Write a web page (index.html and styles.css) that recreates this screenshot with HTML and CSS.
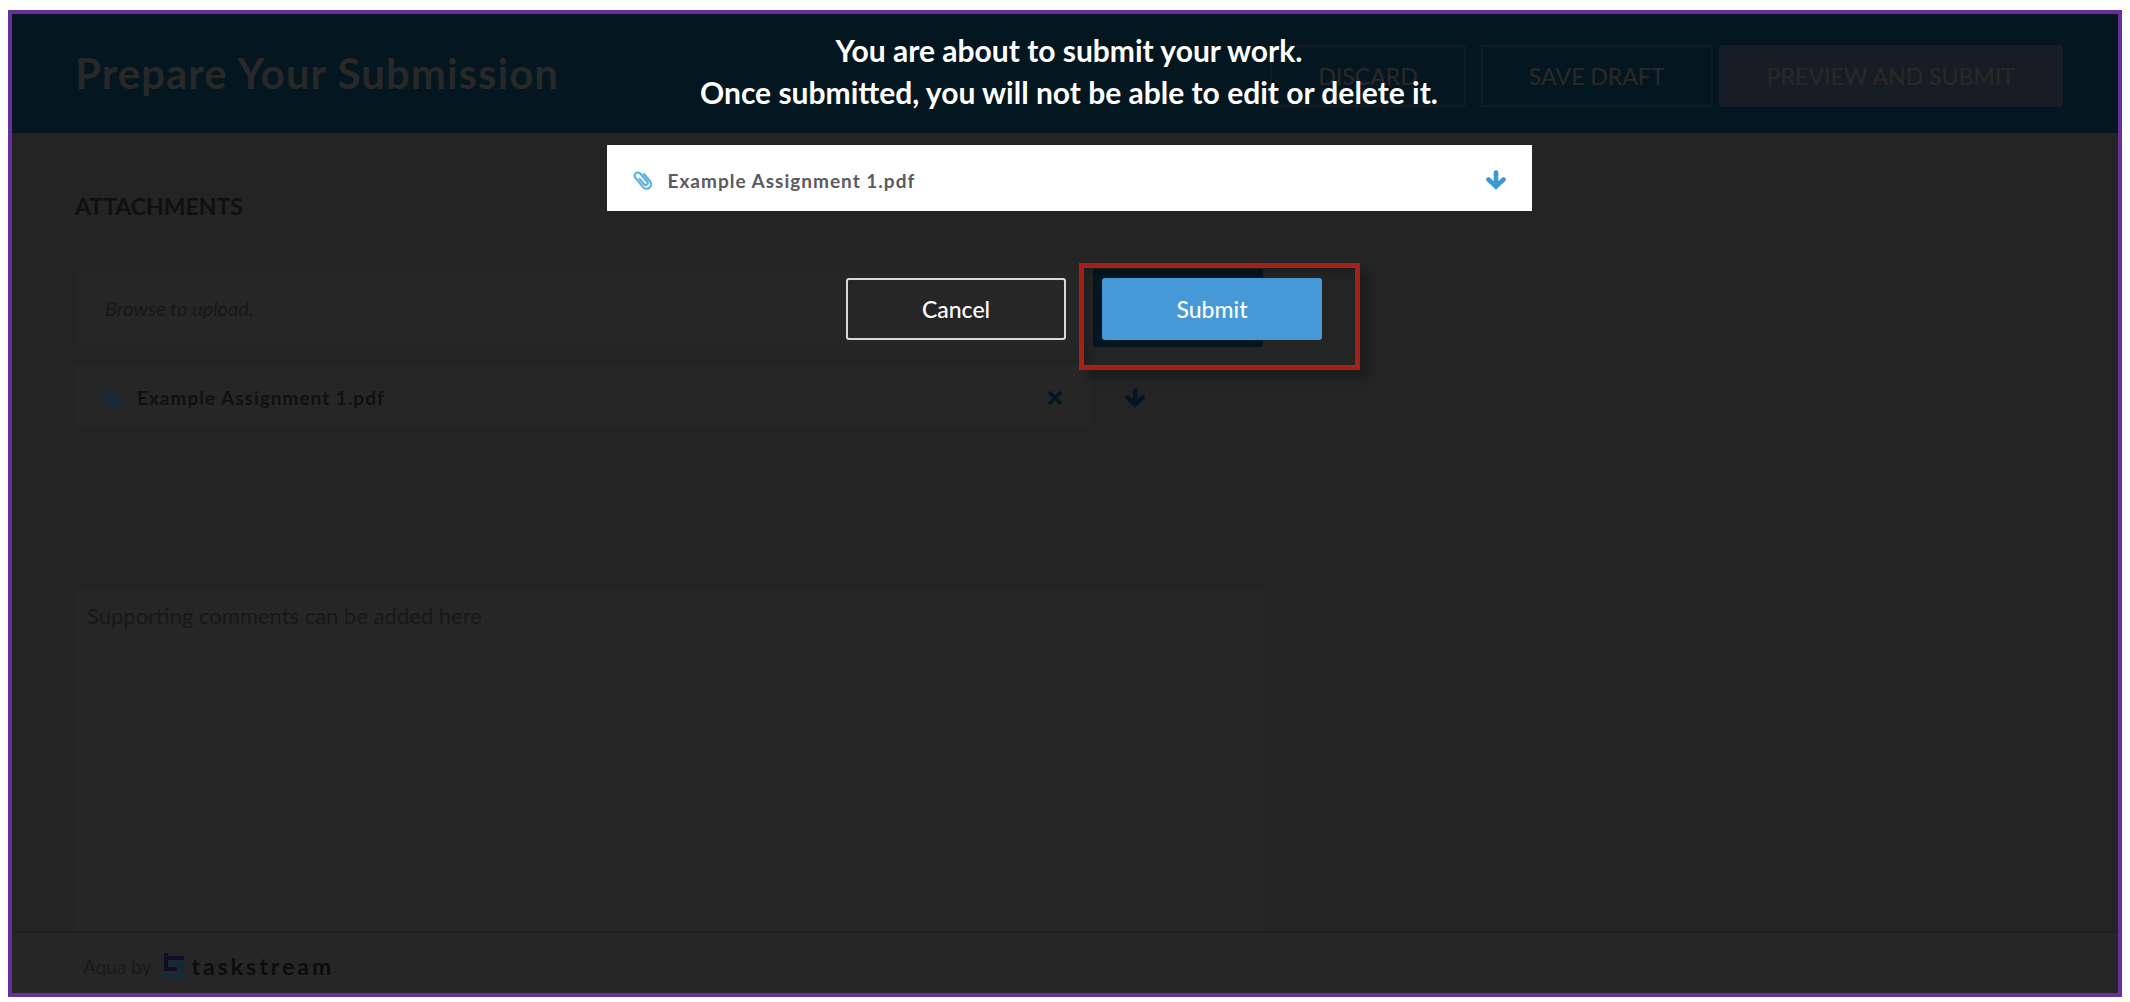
FILE: index.html
```html
<!DOCTYPE html>
<html lang="en">
<head>
<meta charset="utf-8">
<title>Prepare Your Submission</title>
<link rel="stylesheet" href="styles.css">
</head>
<body>
<svg class="sprite" aria-hidden="true">
  <symbol id="clip" viewBox="0 0 20 20">
    <g transform="rotate(-40 10 10)" fill="none" stroke="currentColor" stroke-width="2.200" stroke-linecap="round">
      <path d="M14.500 6V15.500a4.500 4.500 0 0 1-9 0V3.500a3.300 3.300 0 0 1 6.600 0V14a2 2 0 0 1-4 0V7"/>
    </g>
  </symbol>
  <symbol id="arrow" viewBox="0 0 20 20">
    <path d="M10 2.500v13M2.500 9.500l7.500 7 7.500-7" fill="none" stroke="currentColor" stroke-width="4.600" stroke-linecap="round"/>
  </symbol>
  <symbol id="cross" viewBox="0 0 20 20">
    <path d="M4 4l12 12M16 4L4 16" fill="none" stroke="currentColor" stroke-width="3.600"/>
  </symbol>
</svg>
<div class="frame">
  <header class="topbar">
    <h1 class="title">Prepare Your Submission</h1>
    <div class="actions">
      <button class="action discard">DISCARD</button>
      <button class="action">SAVE DRAFT</button>
      <button class="action primary">PREVIEW AND SUBMIT</button>
    </div>
  </header>
  <main class="content">
    <h2 class="section">ATTACHMENTS</h2>
    <div class="upload">
      <input class="browse" type="text" aria-label="Browse to upload" placeholder="Browse to upload." readonly>
      <button class="browse-btn" aria-label="Browse"></button>
    </div>
    <div class="attachment">
      <div class="file">
        <svg class="icon clip"><use href="#clip"/></svg>
        <span class="file-name">Example Assignment 1.pdf</span>
        <button class="icon-btn" aria-label="Remove"><svg class="icon"><use href="#cross"/></svg></button>
      </div>
      <button class="icon-btn download" aria-label="Download"><svg class="icon"><use href="#arrow"/></svg></button>
    </div>
    <textarea class="comments" aria-label="Comments" placeholder="Supporting comments can be added here"></textarea>
  </main>
  <footer class="footer">
    <span class="by">Aqua by</span>
    <svg class="logo" viewBox="0 0 20 26" aria-hidden="true">
      <path d="M2 0V16H13M2 5H20" fill="none" stroke="#150b26" stroke-width="4"/>
      <path d="M6 10.500H18V23H0" fill="none" stroke="#0c2e3c" stroke-width="4"/>
    </svg>
    <span class="brand">taskstream</span>
  </footer>
  <section class="dialog" role="dialog" aria-label="Confirm submission">
    <p class="message">You are about to submit your work.<br>Once submitted, you will not be able to edit or delete it.</p>
    <div class="card">
      <svg class="icon clip"><use href="#clip"/></svg>
      <span class="card-name">Example Assignment 1.pdf</span>
      <button class="icon-btn" aria-label="Download"><svg class="icon"><use href="#arrow"/></svg></button>
    </div>
    <div class="choices">
      <button class="choice cancel">Cancel</button>
      <div class="marked"><button class="choice submit">Submit</button></div>
    </div>
  </section>
</div>
</body>
</html>
```
FILE: styles.css
```css
* { box-sizing: border-box; }
body {
  margin: 0;
  padding: 10px 8px 5px;
  height: 100vh;
  background: #fff;
  font-family: Lato, "Liberation Sans", sans-serif;
}
button, input, textarea { font-family: inherit; margin: 0; border: 0; border-radius: 0; outline: 0; }
.sprite { position: absolute; width: 0; height: 0; }
.frame {
  position: relative;
  display: flex;
  flex-direction: column;
  height: 100%;
  border: 4px solid #66309a;
  background: #242424;
  overflow: hidden;
}
.topbar {
  display: flex;
  align-items: center;
  justify-content: space-between;
  height: 119px;
  padding: 4px 55px 0 63px;
  background: #04161f;
  flex: none;
}
.title { margin: 0; padding-bottom: 6px; font-size: 42px; line-height: 48px; letter-spacing: 1px; font-weight: 700; color: #282828; }
.actions { display: flex; gap: 6px; }
.action {
  height: 62px;
  padding: 0 46px;
  border: 2px solid #131b1e;
  border-radius: 3px;
  background: transparent;
  color: #292827;
  font-size: 23px;
  font-weight: 500;
}
.discard { margin-right: 9px; }
.primary { border-color: #161d24; background: #161d24; }
.content { flex: 1; min-height: 0; display: flex; flex-direction: column; padding: 59px 63px 0; }
.section { margin: 0 0 49px; font-size: 23px; line-height: 28px; font-weight: 700; color: #101010; }
.upload { display: flex; height: 78px; }
.upload, .comments { width: 100%; max-width: 1188px; }
.browse {
  flex: 1;
  padding: 0 29px;
  border: 1px solid #222;
  background: #262626;
  font-size: 20px;
  font-style: italic;
}
.browse::placeholder, .comments::placeholder { color: #181818; opacity: 1; }
.browse-btn { width: 170px; border-radius: 3px; background: #04161f; }
.attachment { display: flex; align-items: center; gap: 33px; margin: 17px 0 163px; }
.file {
  display: flex;
  align-items: center;
  flex: 0 1 1017px;
  height: 63px;
  padding: 4px 27px 0;
  background: #262626;
}
.icon { display: block; width: 20px; height: 20px; }
.clip { margin-right: 15px; color: #102c3e; }
.icon-btn { padding: 0; background: none; color: #04161f; }
.download { padding-top: 4px; }
.file-name, .card-name { flex: 1; font-size: 19px; font-weight: 700; letter-spacing: 1px; color: #101012; }
.comments {
  flex: 1;
  padding: 12px;
  background: #262626;
  font-size: 22px;
  line-height: 28px;
  resize: none;
}
.footer {
  display: flex;
  align-items: center;
  height: 62px;
  padding: 6px 71px 0;
  border-top: 2px solid #212121;
  background: #262626;
  flex: none;
}
.by { margin-right: 13px; font-size: 19px; color: #1a1a1a; }
.logo { width: 20px; height: 26px; margin-right: 7px; }
.brand { font-size: 23px; font-weight: 700; letter-spacing: 3px; color: #0c0c0e; }
.dialog {
  position: absolute;
  inset: 0;
  display: flex;
  flex-direction: column;
  align-items: center;
  padding: 15px 0 0 8px;
}
.message { margin: 0 0 32px; font-size: 30px; line-height: 42px; font-weight: 700; text-align: center; color: #fff; }
.card {
  display: flex;
  align-items: center;
  width: 925px;
  height: 66px;
  padding: 4px 26px 0;
  background: #fff;
}
.card .clip { color: #5ab2e4; }
.card .icon-btn { color: #3d97d6; }
.card-name { color: #5a5a60; }
.choices { display: flex; gap: 36px; margin: 67px 0 0 30px; }
.choice { width: 220px; height: 62px; border-radius: 3px; font-size: 23px; font-weight: 500; color: #fff; }
.cancel { border: 2px solid #d8d8d8; background: #262626; }
.submit { background: #4499d6; }
.marked { position: relative; }
.marked::after {
  content: "";
  position: absolute;
  inset: -15px -38px -30px -23px;
  border: 5px solid #a32117;
  box-shadow: 8px 8px 6px #1c1c1c, inset 6px 6px 6px rgba(0, 0, 0, .15);
  pointer-events: none;
}
```
